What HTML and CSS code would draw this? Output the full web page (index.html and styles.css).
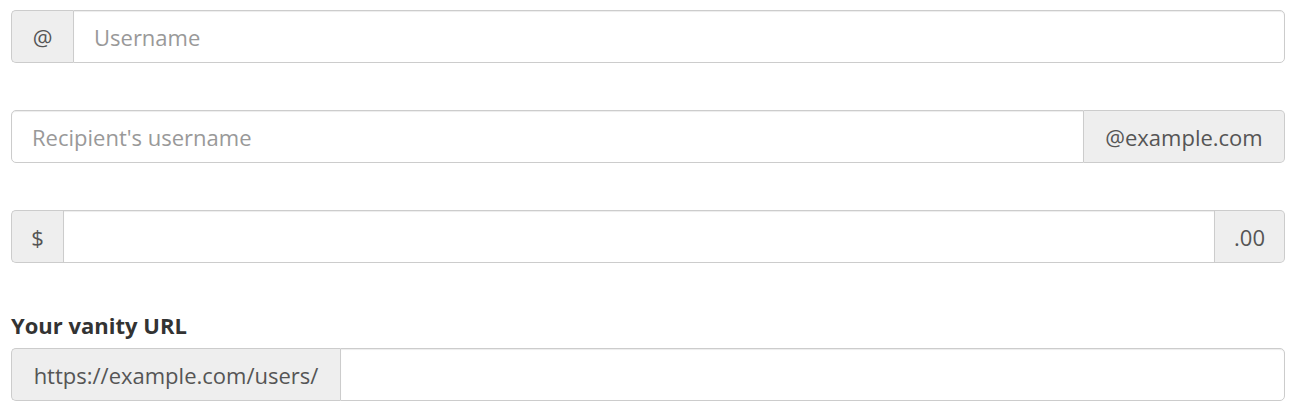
FILE: index.html
```html
<!DOCTYPE html>
<html>
<head>
<meta charset="utf-8">
<link rel="stylesheet" href="styles.css">
</head>
<body>
<div class="page">
  <div class="input-group">
    <span class="addon addon-start addon-at">@</span>
    <input class="field" type="text" placeholder="Username">
  </div>
  <div class="input-group">
    <input class="field" type="text" placeholder="Recipient's username">
    <span class="addon addon-end addon-mail">@example.com</span>
  </div>
  <div class="input-group">
    <span class="addon addon-start addon-dollar">$</span>
    <input class="field" type="text">
    <span class="addon addon-end addon-cents">.00</span>
  </div>
  <label class="label" for="vanity">Your vanity URL</label>
  <div class="input-group">
    <span class="addon addon-start addon-url">https://example.com/users/</span>
    <input class="field" id="vanity" type="text">
  </div>
</div>
</body>
</html>
```
FILE: styles.css
```css
html, body {
  margin: 0;
  padding: 0;
  background: #fff;
}
body {
  font-family: "Open Sans", "Noto Sans", sans-serif;
  color: #333;
}
.page {
  padding: 10px 10px 10px 11px;
  display: flex;
  flex-direction: column;
}
.input-group {
  display: flex;
  height: 53px;
  margin-bottom: 47px;
}
.input-group:last-child {
  margin-bottom: 0;
}
.addon {
  box-sizing: border-box;
  display: flex;
  align-items: center;
  justify-content: center;
  flex: none;
  background: #eee;
  border: 1px solid #ccc;
  color: #555;
  font-size: 22px;
  padding: 0 16px;
  white-space: nowrap;
}
.addon-start {
  border-right: 0;
  border-radius: 5px 0 0 5px;
}
.addon-end {
  border-left: 0;
  border-radius: 0 5px 5px 0;
}
.field {
  box-sizing: border-box;
  flex: 1;
  min-width: 0;
  height: 100%;
  border: 1px solid #ccc;
  border-radius: 0;
  background: #fff;
  font-family: inherit;
  font-size: 22px;
  color: #555;
  padding: 0 20px;
  margin: 0;
  outline: none;
  box-shadow: inset 0 1px 1px rgba(0,0,0,0.075);
}
.field:first-child {
  border-radius: 5px 0 0 5px;
}
.field:last-child {
  border-radius: 0 5px 5px 0;
}
.field::placeholder {
  color: #999;
}
.addon-at { width: 62px; }
.addon-dollar { width: 52px; }
.addon-cents { width: 70px; }
.addon-mail { width: 201px; }
.addon-url { width: 329px; }
.label {
  display: block;
  font-weight: bold;
  font-size: 22px;
  line-height: 30px;
  margin-top: 0;
  margin-bottom: 8px;
  color: #333;
}
```
